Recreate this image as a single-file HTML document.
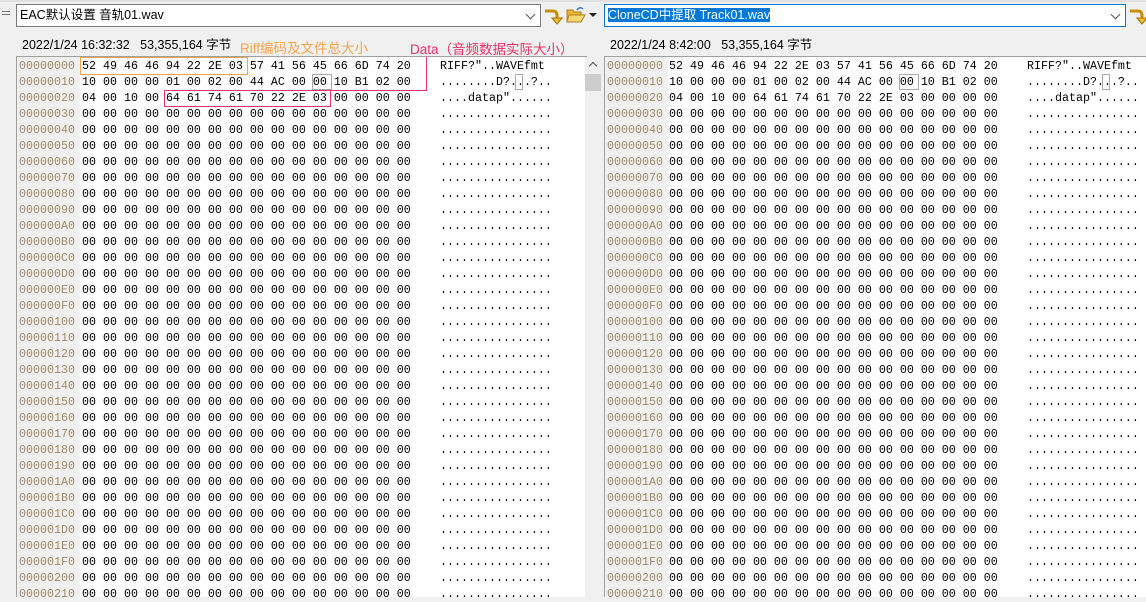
<!DOCTYPE html>
<html><head><meta charset="utf-8">
<style>
body{margin:0;width:1146px;height:591px;background:#f0f0f0;position:relative;overflow:hidden;font-family:"Liberation Sans","Noto Sans CJK SC",sans-serif;}
.abs{position:absolute}
.combo{position:absolute;top:4px;height:23px;background:#fff;border:1px solid #7a7a7a;box-sizing:border-box;font-size:12.5px;line-height:21px;padding-left:3px;}
.chev{position:absolute;right:6px;top:6px;width:6px;height:6px;border-right:1px solid #555;border-bottom:1px solid #555;transform:rotate(45deg);}
.info{position:absolute;top:34px;font-size:12.5px;color:#000;}
pre{margin:0;position:absolute;font-family:"Liberation Mono",monospace;font-size:11.67px;line-height:16px;}
.off{color:#a08a6a;}
.pane{position:absolute;top:56px;height:540px;background:#fff;border-left:1px solid #a0a0a0;border-top:1px solid #a0a0a0;}
.offbg{position:absolute;top:57px;height:540px;background:#f0f0f0;}
.box{position:absolute;box-sizing:border-box;}
</style></head><body>
<div class="abs" style="left:0;top:0;width:1146px;height:2px;background:#e0e0e0"></div>
<div class="abs" style="left:2px;top:11px;width:8px;height:1px;background:#777"></div>
<div class="abs" style="left:2px;top:14px;width:8px;height:1px;background:#777"></div>

<div class="combo" style="left:16px;width:525px;">EAC默认设置 音轨01.wav<div class="chev"></div></div>
<svg class="abs" style="left:543px;top:6px" width="20" height="20" viewBox="0 0 20 20"><path d="M2 5 H10 Q14 5 14 10 V13" fill="none" stroke="#c89000" stroke-width="3"/><path d="M9 12 L14 18 L19 12 Z" fill="#f0c030" stroke="#a07000" stroke-width="1"/></svg>
<svg class="abs" style="left:566px;top:6px" width="20" height="18" viewBox="0 0 20 18"><path d="M1 4 H7 L8 6 H15 V16 H1 Z" fill="#e8b830" stroke="#b08020"/><path d="M3 9 H19 L15 16 H1 Z" fill="#f8d870" stroke="#b08020"/><path d="M11 4 Q14 0 17 3" fill="none" stroke="#3a7bd5" stroke-width="1.5"/></svg>
<div class="abs" style="left:589px;top:13px;width:0;height:0;border-left:4px solid transparent;border-right:4px solid transparent;border-top:4px solid #222"></div>

<div class="combo" style="left:604px;width:522px;border:1px solid #0078d7;"><span style="background:#0078d7;color:#fff">CloneCD中提取 Track01.wav</span><div class="chev"></div></div>
<svg class="abs" style="left:1128px;top:6px" width="20" height="20" viewBox="0 0 20 20"><path d="M2 5 H10 Q14 5 14 10 V13" fill="none" stroke="#c89000" stroke-width="3"/><path d="M9 12 L14 18 L19 12 Z" fill="#f0c030" stroke="#a07000" stroke-width="1"/></svg>

<div class="info" style="left:22px">2022/1/24 16:32:32&nbsp;&nbsp;&nbsp;53,355,164 字节</div>
<div class="info" style="left:610px">2022/1/24 8:42:00&nbsp;&nbsp;&nbsp;53,355,164 字节</div>
<div class="abs" style="left:240px;top:37px;font-size:13.5px;color:#f5a54a">Riff编码及文件总大小</div>
<div class="abs" style="left:410px;top:38px;font-size:13.5px;color:#e8336a">Data（音频数据实际大小）</div>

<div class="pane" style="left:16px;width:570px"></div>
<div class="offbg" style="left:17px;width:63px"></div>
<div class="abs" style="left:585px;top:57px;width:16px;height:540px;background:#f0f0f0"></div>
<div class="abs" style="left:585px;top:74px;width:16px;height:17px;background:#cdcdcd"></div>
<div class="abs" style="left:590px;top:63px;width:5px;height:5px;border-left:1.5px solid #555;border-top:1.5px solid #555;transform:rotate(45deg)"></div>

<div class="pane" style="left:604px;width:545px"></div>
<div class="offbg" style="left:605px;width:63px"></div>

<pre class="off" style="left:19px;top:58px">00000000
00000010
00000020
00000030
00000040
00000050
00000060
00000070
00000080
00000090
000000A0
000000B0
000000C0
000000D0
000000E0
000000F0
00000100
00000110
00000120
00000130
00000140
00000150
00000160
00000170
00000180
00000190
000001A0
000001B0
000001C0
000001D0
000001E0
000001F0
00000200
00000210</pre>
<pre class="off" style="left:607px;top:58px">00000000
00000010
00000020
00000030
00000040
00000050
00000060
00000070
00000080
00000090
000000A0
000000B0
000000C0
000000D0
000000E0
000000F0
00000100
00000110
00000120
00000130
00000140
00000150
00000160
00000170
00000180
00000190
000001A0
000001B0
000001C0
000001D0
000001E0
000001F0
00000200
00000210</pre>

<pre style="left:82px;top:58px">52 49 46 46 94 22 2E 03 57 41 56 45 66 6D 74 20
10 00 00 00 01 00 02 00 44 AC 00 00 10 B1 02 00
04 00 10 00 64 61 74 61 70 22 2E 03 00 00 00 00
00 00 00 00 00 00 00 00 00 00 00 00 00 00 00 00
00 00 00 00 00 00 00 00 00 00 00 00 00 00 00 00
00 00 00 00 00 00 00 00 00 00 00 00 00 00 00 00
00 00 00 00 00 00 00 00 00 00 00 00 00 00 00 00
00 00 00 00 00 00 00 00 00 00 00 00 00 00 00 00
00 00 00 00 00 00 00 00 00 00 00 00 00 00 00 00
00 00 00 00 00 00 00 00 00 00 00 00 00 00 00 00
00 00 00 00 00 00 00 00 00 00 00 00 00 00 00 00
00 00 00 00 00 00 00 00 00 00 00 00 00 00 00 00
00 00 00 00 00 00 00 00 00 00 00 00 00 00 00 00
00 00 00 00 00 00 00 00 00 00 00 00 00 00 00 00
00 00 00 00 00 00 00 00 00 00 00 00 00 00 00 00
00 00 00 00 00 00 00 00 00 00 00 00 00 00 00 00
00 00 00 00 00 00 00 00 00 00 00 00 00 00 00 00
00 00 00 00 00 00 00 00 00 00 00 00 00 00 00 00
00 00 00 00 00 00 00 00 00 00 00 00 00 00 00 00
00 00 00 00 00 00 00 00 00 00 00 00 00 00 00 00
00 00 00 00 00 00 00 00 00 00 00 00 00 00 00 00
00 00 00 00 00 00 00 00 00 00 00 00 00 00 00 00
00 00 00 00 00 00 00 00 00 00 00 00 00 00 00 00
00 00 00 00 00 00 00 00 00 00 00 00 00 00 00 00
00 00 00 00 00 00 00 00 00 00 00 00 00 00 00 00
00 00 00 00 00 00 00 00 00 00 00 00 00 00 00 00
00 00 00 00 00 00 00 00 00 00 00 00 00 00 00 00
00 00 00 00 00 00 00 00 00 00 00 00 00 00 00 00
00 00 00 00 00 00 00 00 00 00 00 00 00 00 00 00
00 00 00 00 00 00 00 00 00 00 00 00 00 00 00 00
00 00 00 00 00 00 00 00 00 00 00 00 00 00 00 00
00 00 00 00 00 00 00 00 00 00 00 00 00 00 00 00
00 00 00 00 00 00 00 00 00 00 00 00 00 00 00 00
00 00 00 00 00 00 00 00 00 00 00 00 00 00 00 00</pre>
<pre style="left:669px;top:58px">52 49 46 46 94 22 2E 03 57 41 56 45 66 6D 74 20
10 00 00 00 01 00 02 00 44 AC 00 00 10 B1 02 00
04 00 10 00 64 61 74 61 70 22 2E 03 00 00 00 00
00 00 00 00 00 00 00 00 00 00 00 00 00 00 00 00
00 00 00 00 00 00 00 00 00 00 00 00 00 00 00 00
00 00 00 00 00 00 00 00 00 00 00 00 00 00 00 00
00 00 00 00 00 00 00 00 00 00 00 00 00 00 00 00
00 00 00 00 00 00 00 00 00 00 00 00 00 00 00 00
00 00 00 00 00 00 00 00 00 00 00 00 00 00 00 00
00 00 00 00 00 00 00 00 00 00 00 00 00 00 00 00
00 00 00 00 00 00 00 00 00 00 00 00 00 00 00 00
00 00 00 00 00 00 00 00 00 00 00 00 00 00 00 00
00 00 00 00 00 00 00 00 00 00 00 00 00 00 00 00
00 00 00 00 00 00 00 00 00 00 00 00 00 00 00 00
00 00 00 00 00 00 00 00 00 00 00 00 00 00 00 00
00 00 00 00 00 00 00 00 00 00 00 00 00 00 00 00
00 00 00 00 00 00 00 00 00 00 00 00 00 00 00 00
00 00 00 00 00 00 00 00 00 00 00 00 00 00 00 00
00 00 00 00 00 00 00 00 00 00 00 00 00 00 00 00
00 00 00 00 00 00 00 00 00 00 00 00 00 00 00 00
00 00 00 00 00 00 00 00 00 00 00 00 00 00 00 00
00 00 00 00 00 00 00 00 00 00 00 00 00 00 00 00
00 00 00 00 00 00 00 00 00 00 00 00 00 00 00 00
00 00 00 00 00 00 00 00 00 00 00 00 00 00 00 00
00 00 00 00 00 00 00 00 00 00 00 00 00 00 00 00
00 00 00 00 00 00 00 00 00 00 00 00 00 00 00 00
00 00 00 00 00 00 00 00 00 00 00 00 00 00 00 00
00 00 00 00 00 00 00 00 00 00 00 00 00 00 00 00
00 00 00 00 00 00 00 00 00 00 00 00 00 00 00 00
00 00 00 00 00 00 00 00 00 00 00 00 00 00 00 00
00 00 00 00 00 00 00 00 00 00 00 00 00 00 00 00
00 00 00 00 00 00 00 00 00 00 00 00 00 00 00 00
00 00 00 00 00 00 00 00 00 00 00 00 00 00 00 00
00 00 00 00 00 00 00 00 00 00 00 00 00 00 00 00</pre>

<pre style="left:440px;top:58px">RIFF?"..WAVEfmt 
........D?...?..
....datap"......
................
................
................
................
................
................
................
................
................
................
................
................
................
................
................
................
................
................
................
................
................
................
................
................
................
................
................
................
................
................
................</pre>
<pre style="left:1027px;top:58px">RIFF?"..WAVEfmt 
........D?...?..
....datap"......
................
................
................
................
................
................
................
................
................
................
................
................
................
................
................
................
................
................
................
................
................
................
................
................
................
................
................
................
................
................
................</pre>

<div class="box" style="left:80px;top:57px;width:168px;height:18px;border:1px solid #f5a54a"></div>
<div class="box" style="left:164px;top:90px;width:167px;height:17px;border:1px solid #e8336a"></div>
<div class="abs" style="left:331px;top:90px;width:96px;height:1px;background:#e8336a"></div>
<div class="abs" style="left:426px;top:57px;width:1px;height:34px;background:#e8336a"></div>
<div class="box" style="left:312px;top:74px;width:20px;height:16px;border:1px solid #aaa"></div>
<div class="box" style="left:515px;top:74px;width:8px;height:16px;border:1px solid #aaa"></div>
<div class="box" style="left:899px;top:74px;width:20px;height:16px;border:1px solid #aaa"></div>
<div class="box" style="left:1102px;top:74px;width:8px;height:16px;border:1px solid #aaa"></div>
</body></html>
